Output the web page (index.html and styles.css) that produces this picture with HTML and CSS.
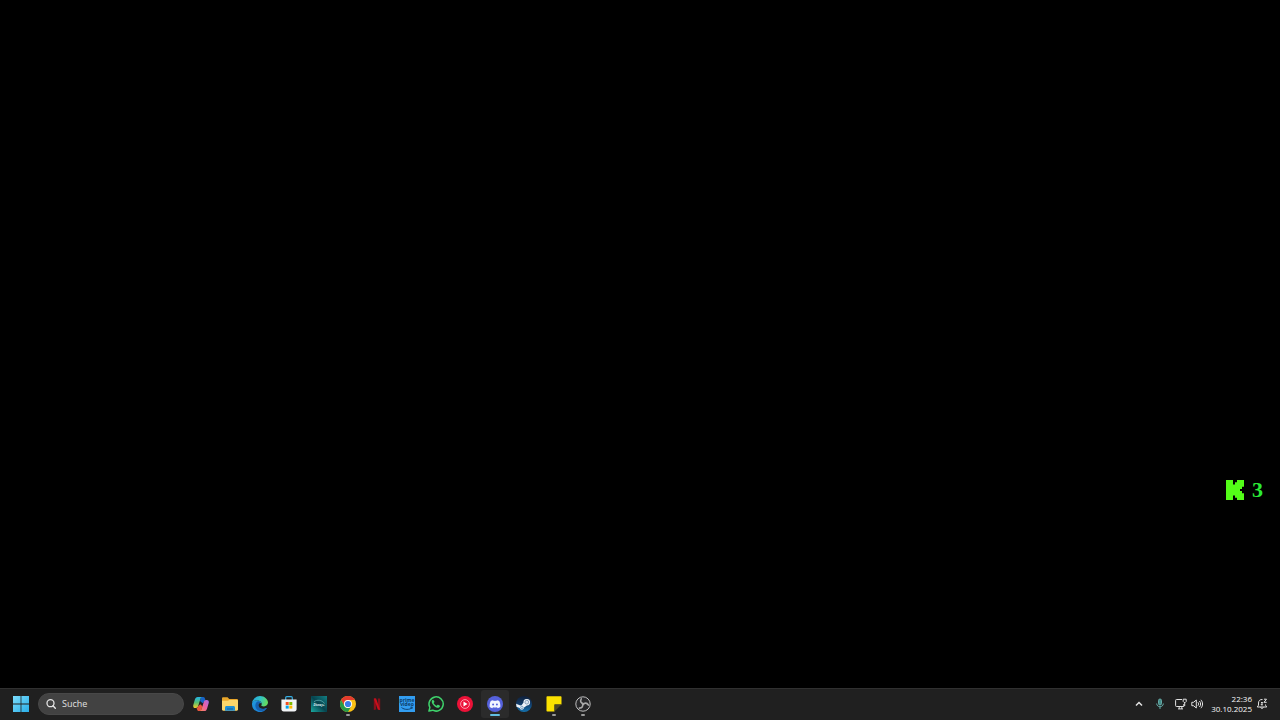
FILE: index.html
```html
<!DOCTYPE html>
<html lang="de">
<head>
  <meta charset="UTF-8" />
  <meta name="viewport" content="width=device-width, initial-scale=1.0"/>
  <title>Desktop</title>
  <link rel="stylesheet" href="styles.css">
</head>

<body>
  <!-- Desktop -->
  <main class="desktop">
    <div class="kick-counter">
      <svg class="kick-logo" viewBox="0 0 9 10" preserveAspectRatio="none" aria-hidden="true">
        <path fill="#53fc18" d="M0 0h3.500v2.200h1V1.100h1V0H9v3.400H8v1.100H7v1h1v1.100h1V10H5.500V8.900h-1V7.800h-1V10H0z"/>
      </svg>
      <span class="kick-count">3</span>
    </div>
  </main>

  <!-- Taskbar -->
  <footer class="taskbar">
    <div class="taskbar-left">
      <button class="app" aria-label="Start">
        <svg class="icon" viewBox="0 0 16 16">
          <defs>
            <linearGradient id="win" x1="0" y1="0" x2="1" y2="1">
              <stop offset="0" stop-color="#7bdcfb"/><stop offset="1" stop-color="#29aee8"/>
            </linearGradient>
          </defs>
          <path fill="url(#win)" d="M0 0h7.600v7.600H0zM8.400 0H16v7.600H8.400zM0 8.400h7.600V16H0zM8.400 8.400H16V16H8.400z"/>
        </svg>
      </button>

      <label class="search">
        <svg class="search-icon" viewBox="0 0 10 10">
          <circle cx="4.500" cy="4.200" r="3.500" fill="none" stroke="#e4e4e4" stroke-width="1.300"/>
          <path d="M7 6.800l2.300 2.400" stroke="#e4e4e4" stroke-width="1.400" stroke-linecap="round"/>
        </svg>
        <input type="text" placeholder="Suche" aria-label="Suche">
      </label>

      <nav class="apps">
        <button class="app" aria-label="Copilot">
          <svg class="icon" viewBox="0 0 16 16">
            <defs>
              <linearGradient id="cpA" x1="0" y1="0" x2="0" y2="1">
                <stop offset="0" stop-color="#23b5e8"/><stop offset=".5" stop-color="#56bf74"/><stop offset="1" stop-color="#f4cb28"/>
              </linearGradient>
              <linearGradient id="cpB" x1="1" y1="0" x2="0" y2="1">
                <stop offset="0" stop-color="#a56be8"/><stop offset=".5" stop-color="#ec5fa5"/><stop offset="1" stop-color="#f78555"/>
              </linearGradient>
            </defs>
            <path fill="#1763c6" d="M8 1h2.300c1 0 1.400.7 1.700 1.800l.6 2-3 2.500L7 5z"/>
            <path fill="url(#cpA)" d="M4.800 1h4.100c-1 .4-1.300 1.200-1.600 2.200L5.200 10c-.4 1.300-1 2-2.300 2H2.200C.5 12-.1 10.700.3 9l1.600-5.400C2.400 1.900 3.200 1 4.800 1z"/>
            <path fill="#e9553d" d="M8 15H5.700c-1 0-1.400-.7-1.700-1.800l-.4-1.300c1-.2 1.300-.9 1.600-1.700l2-2 2.300 2-.8 2.600C8.400 14 8.600 14.600 8 15z"/>
            <path fill="url(#cpB)" d="M11.200 15H7.100c1-.4 1.300-1.200 1.600-2.200L10.800 6c.4-1.300 1-2 2.300-2h.7c1.700 0 2.300 1.300 1.900 3l-1.600 5.400c-.5 1.700-1.300 2.600-2.900 2.600z"/>
          </svg>
        </button>
        <button class="app" aria-label="Explorer">
          <svg class="icon" viewBox="0 0 16 16">
            <path fill="#e8a62b" d="M0 2.500C0 1.700.5 1.200 1.300 1.200h4.300L7.200 3h7.500c.8 0 1.300.5 1.300 1.200V7H0z"/>
            <path fill="#fbd66a" d="M0 4.800h5.800L7.400 4h7.500c.7 0 1.100.4 1.100 1.100v8.400c0 .7-.5 1.200-1.200 1.200H1.200C.5 14.700 0 14.200 0 13.500z"/>
            <path fill="#1f8fd3" d="M3 14.700v-3.200c0-.9.600-1.500 1.500-1.500h7c.9 0 1.500.6 1.500 1.500v3.200z"/>
            <path fill="#145f9f" d="M5 12.500h6v1H5z"/>
          </svg>
        </button>
        <button class="app" aria-label="Edge">
          <svg class="icon" viewBox="0 0 16 16">
            <defs>
              <linearGradient id="edA" x1="0" y1="0" x2="1" y2=".3">
                <stop offset="0" stop-color="#249fe0"/><stop offset=".55" stop-color="#32c3c7"/><stop offset="1" stop-color="#62db62"/>
              </linearGradient>
              <linearGradient id="edB" x1="0" y1="0" x2="1" y2="1">
                <stop offset="0" stop-color="#219ce0"/><stop offset="1" stop-color="#1976cc"/>
              </linearGradient>
            </defs>
            <path fill="url(#edB)" d="M.1 7C.8 4.800 3 4 5.100 4.200 8 4.500 9.500 6 9.500 7.600 8 6.200 6.300 7.500 6.300 9.300c0 2.700 3 4.400 5.700 3.600.8-.2 1.500-.5 2.200-.9.4-.2.600.1.400.5A8 8 0 0 1 0 8.500z"/>
            <path fill="#155fae" d="M6 5.200c-3.300 1.400-3.500 6.300-.4 8.800 2.500 2 6.300 1.200 8.700-1.500.4-.5.100-.8-.4-.5-3.700 2-7.600.1-7.600-2.700 0-1.500 1-2.500 2.200-2.500C8.300 6 7.400 5.300 6 5.200z"/>
            <path fill="url(#edA)" d="M0 7.600A8 8 0 0 1 8 0c4.800 0 8 3.500 8 6.600 0 2.300-1.900 3.900-4.100 3.900-2 0-3-.8-2.500-1.500.5-.7.500-1.300.2-2C8.900 5.200 7.100 4.200 5 4.200 2.200 4.200.2 5.800 0 7.600z"/>
          </svg>
        </button>
        <button class="app" aria-label="Microsoft Store">
          <svg class="icon" viewBox="0 0 16 16">
            <path fill="none" stroke="#36aee3" stroke-width="1.200" d="M4.700 4V1.800c0-.7.400-1.100 1.100-1.100h4.400c.7 0 1.100.4 1.100 1.100V4"/>
            <path fill="#f1f3f5" d="M.4 3.500h15.200v9.600c0 1.500-.8 2.400-2.300 2.400H2.700C1.200 15.500.4 14.600.4 13.100z"/>
            <path fill="#f25022" d="M4.700 6h3v3h-3z"/>
            <path fill="#7fba00" d="M8.300 6h3v3h-3z"/>
            <path fill="#00a4ef" d="M4.700 9.600h3v3h-3z"/>
            <path fill="#ffb900" d="M8.300 9.600h3v3h-3z"/>
          </svg>
        </button>
        <button class="app" aria-label="Disney+">
          <svg class="icon" viewBox="0 0 16 16">
            <defs>
              <linearGradient id="dis" x1="1" y1="0" x2="0" y2="1">
                <stop offset="0" stop-color="#127f83"/><stop offset=".5" stop-color="#07434e"/><stop offset="1" stop-color="#1aa9a0"/>
              </linearGradient>
            </defs>
            <path fill="url(#dis)" d="M0 0h16v16H0z"/>
            <path fill="none" stroke="#69b9bb" stroke-width=".7" d="M3 5.700c3-2.400 8.300-1.800 10.500 1.800"/>
            <text class="disney-text" x="8" y="10">Disney+</text>
          </svg>
        </button>
        <button class="app running" aria-label="Chrome">
          <svg class="icon" viewBox="0 0 16 16">
            <circle cx="8" cy="8" r="8" fill="#fbc116"/>
            <path fill="#e33b2e" d="M1.070 4A8 8 0 0 1 14.930 4H8a4 4 0 0 0-3.460 6z"/>
            <path fill="#269b48" d="M1.070 4A8 8 0 0 0 8 16l3.460-6a4 4 0 0 1-6.920 0z"/>
            <circle cx="8" cy="8" r="4" fill="#fff"/>
            <circle cx="8" cy="8" r="3.100" fill="#3b7de8"/>
          </svg>
        </button>
        <button class="app" aria-label="Netflix">
          <svg class="icon" viewBox="0 0 16 16">
            <path fill="#86101a" d="M4.800 2.500h2.300v11l-2.300.4zM8.900 2.500h2.300v11.400l-2.300-.4z"/>
            <path fill="#c90f1c" d="M4.800 2.500h2.300l4.100 11.400-2.400-.4z"/>
          </svg>
        </button>
        <button class="app" aria-label="Prime Video">
          <svg class="icon" viewBox="0 0 16 16">
            <path fill="#329df0" d="M0 0h16v16H0z"/>
            <text class="prime-text" x="8" y="5.500">prime</text>
            <text class="prime-text" x="8" y="10">video</text>
            <path fill="none" stroke="#0b3b68" stroke-width=".9" d="M2.500 11.500c3 2.500 8 2.500 10.500.2M11.300 11.200l2-.1-.5 1.900"/>
          </svg>
        </button>
        <button class="app" aria-label="WhatsApp">
          <svg class="icon" viewBox="0 0 16 16">
            <path fill="none" stroke="#3fd36c" stroke-width="1.500" stroke-linejoin="round" d="M.9 15.100l1-3.700A7.100 7.100 0 1 1 4.700 14.200z"/>
            <path fill="#3fd36c" d="M5.500 4.200c-.3-.5-.9-.4-1.300.1-1.700 2.300 1.700 6 4.300 7.200 1.600.7 3.400.1 3.500-1.500 0-.3-.1-.5-.4-.6l-1.500-.7c-.3-.1-.5 0-.7.2l-.6.700c-.2.2-.4.2-.6.100C7 9.100 6.200 8.200 5.700 7.300c-.1-.2 0-.4.100-.5l.5-.6c.1-.2.200-.4.100-.6z"/>
          </svg>
        </button>
        <button class="app" aria-label="YouTube Music">
          <svg class="icon" viewBox="0 0 16 16">
            <circle cx="8" cy="8" r="8" fill="#ec1238"/>
            <circle cx="8" cy="8" r="4.400" fill="none" stroke="#ffb5c2" stroke-width=".8"/>
            <path fill="#fff" d="M6.500 5.500l4 2.500-4 2.500z"/>
          </svg>
        </button>
        <button class="app active" aria-label="Discord">
          <svg class="icon" viewBox="0 0 16 16">
            <circle cx="8" cy="8" r="8" fill="#5561dc"/>
            <path fill="#f3f4ff" fill-rule="evenodd" d="M6.300 4.200c-1 .1-1.800.4-2.500.8C2.900 6.700 2.500 8.700 2.700 11c.9.600 1.800 1 2.700 1.200l.6-1c1.300.3 2.700.3 4 0l.6 1c.9-.2 1.800-.6 2.700-1.200.2-2.300-.2-4.300-1.100-6-.7-.4-1.500-.7-2.500-.8l-.3.700a9 9 0 0 0-2.800 0zM6.100 7.400a1 1.100 0 1 1 0 2.200 1 1.100 0 0 1 0-2.200zM9.900 7.400a1 1.100 0 1 1 0 2.200 1 1.100 0 0 1 0-2.200z"/>
          </svg>
        </button>
        <button class="app" aria-label="Steam">
          <svg class="icon" viewBox="0 0 16 16">
            <defs>
              <linearGradient id="stm" x1="0" y1="0" x2="0" y2="1">
                <stop offset="0" stop-color="#101f38"/><stop offset=".5" stop-color="#123c69"/><stop offset="1" stop-color="#1473b0"/>
              </linearGradient>
            </defs>
            <circle cx="8" cy="8" r="8" fill="url(#stm)"/>
            <path fill="#eef3f8" d="M.1 7.800l4.300 1.800c.4-.2.800-.3 1.200-.3L7.500 6.500a3.300 3.300 0 1 1 3.400 3L8.100 11.600a2.300 2.300 0 0 1-4.500.5L.5 10.800z"/>
            <circle cx="10.800" cy="6.200" r="1.900" fill="#dbe6f0" stroke="#3a5f85" stroke-width=".5"/>
            <circle cx="5.900" cy="11.500" r="1.300" fill="#d4e3ef" stroke="#3a6f9c" stroke-width=".5"/>
          </svg>
        </button>
        <button class="app running" aria-label="Kurznotizen">
          <svg class="icon" viewBox="0 0 16 16">
            <path fill="#fce100" d="M1.200.3h13.600c.4 0 .7.3.7.7v7.500h-7v7H1.200c-.4 0-.7-.3-.7-.7V1c0-.4.3-.7.700-.7z"/>
            <path fill="#4d4626" d="M8.500 8.500h7l-7 7z"/>
          </svg>
        </button>
        <button class="app running" aria-label="OBS Studio">
          <svg class="icon" viewBox="0 0 16 16">
            <circle cx="8" cy="8" r="7.200" fill="#272729" stroke="#bdbdbd" stroke-width="1"/>
            <g fill="none" stroke="#a8a8a8" stroke-width="1.600" stroke-linecap="round">
              <path d="M6.200 2.800c-1.300 2.600-.2 4.600 2.500 4.900"/>
              <path d="M6.200 2.800c-1.300 2.600-.2 4.600 2.500 4.900" transform="rotate(120 8 8)"/>
              <path d="M6.200 2.800c-1.300 2.600-.2 4.600 2.500 4.900" transform="rotate(240 8 8)"/>
            </g>
          </svg>
        </button>
      </nav>
    </div>

    <!-- Infobereich -->
    <div class="tray">
      <button class="tray-button" aria-label="Ausgeblendete Symbole">
        <svg class="tray-icon" viewBox="0 0 12 12"><path d="M3 7.500l3-3 3 3" stroke-width="1.500"/></svg>
      </button>
      <button class="tray-button mic" aria-label="Mikrofon">
        <svg class="tray-icon" viewBox="0 0 12 12">
          <rect x="4.500" y="1" width="3" height="6" rx="1.500" fill="#478d8a"/>
          <path d="M2.700 5.500c0 4.300 6.600 4.300 6.600 0M6 8.800V11"/>
        </svg>
      </button>
      <button class="tray-button system" aria-label="Netzwerk und Lautstärke">
        <svg class="tray-icon" viewBox="0 0 12 12">
          <path d="M7 1.500H1.500c-.6 0-.9.300-.9.900v5.200c0 .6.300.9.900.9h7.300V6M3 10.900h5M4.200 8.500v2.400M6.800 8.500v2.400"/>
          <path d="M8.200 1.200h3v2.300l-1 1h-1l-1-1zM9.700 4.500V8"/>
        </svg>
        <svg class="tray-icon" viewBox="0 0 12 12">
          <path d="M.8 4.300h1.700L5.300 2v8L2.500 7.700H.8zM6.900 4.300c.9 1 .9 2.400 0 3.400M8.400 3c1.600 1.700 1.600 4.300 0 6M9.900 1.800c2.200 2.500 2.200 5.900 0 8.400"/>
        </svg>
      </button>
      <button class="clock">
        <time datetime="22:36">22:36</time>
        <time datetime="2025-10-30">30.10.2025</time>
      </button>
      <button class="tray-button bell" aria-label="Benachrichtigungen">
        <svg class="tray-icon" viewBox="0 0 12 12">
          <path d="M6.500 1.500C4 1.200 2.500 2.800 2.500 5v2.200L1.300 9h9.400L9.500 7.200V6.500M4.700 9.300c.3 1.500 2.300 1.500 2.600 0M8 1.200h2.500L8 4.300h2.700M5 4.500h1.800L5 6.800h2"/>
        </svg>
      </button>
    </div>
  </footer>
</body>
</html>
```
FILE: styles.css
```css
/* ===== Reset & Font ===== */
* {
  margin: 0;
  padding: 0;
  box-sizing: border-box;
}
body {
  min-height: 100vh;
  display: flex;
  flex-direction: column;
  background: #000;
  font-family: "Open Sans", "Noto Sans", sans-serif;
  overflow: hidden;
}
button {
  background: none;
  border: none;
  font-family: inherit;
  color: inherit;
}
svg {
  display: block;
}

/* ===== Desktop ===== */
.desktop {
  flex: 1;
  position: relative;
}
.kick-counter {
  position: absolute;
  right: 17px;
  bottom: 186px;
  display: flex;
  align-items: center;
  gap: 8px;
}
.kick-logo {
  width: 18px;
  height: 20px;
}
.kick-count {
  font: bold 22px/24px "Liberation Serif", serif;
  color: #2bea35;
}

/* ===== Taskbar ===== */
.taskbar {
  height: 32px;
  padding: 0 12px 0 7px;
  display: flex;
  align-items: center;
  justify-content: space-between;
  background: #202020;
  box-shadow: inset 0 1px #303030;
  color: #f8f8f8;
}
.taskbar-left {
  display: flex;
  align-items: center;
  gap: 3px;
}
.search {
  width: 146px;
  height: 22px;
  padding: 0 7px;
  display: flex;
  align-items: center;
  gap: 6px;
  background: #424242;
  border: 1px solid #484848;
  border-radius: 11px;
}
.search-icon {
  width: 10px;
  height: 10px;
  flex: none;
}
.search input {
  flex: 1;
  min-width: 0;
  background: none;
  border: none;
  outline: none;
  font: 9px/12px "Open Sans", "Noto Sans", sans-serif;
  color: #fff;
}
.search input::placeholder {
  color: #e0e0e0;
}

/* ===== Apps ===== */
.apps {
  width: 410px;
  display: flex;
  justify-content: space-between;
}
.app {
  position: relative;
  width: 28px;
  height: 28px;
  display: flex;
  align-items: center;
  justify-content: center;
  border-radius: 3px;
}
.icon {
  width: 16px;
  height: 16px;
}
.app.active {
  background: #2b2b2b;
}
.app.running::after,
.app.active::after {
  content: "";
  position: absolute;
  bottom: 2px;
  width: 4px;
  height: 2px;
  border-radius: 1px;
  background: #9a9a9a;
}
.app.active::after {
  width: 10px;
  background: #62bfe3;
}
.disney-text {
  font: italic bold 3px "Open Sans", sans-serif;
  fill: #d9eeee;
  text-anchor: middle;
}
.prime-text {
  font: bold 5px "Open Sans", sans-serif;
  fill: #0b3b68;
  text-anchor: middle;
}

/* ===== Tray ===== */
.tray {
  display: flex;
  align-items: center;
  gap: 4px;
}
.tray-button {
  display: flex;
  align-items: center;
}
.tray-icon {
  width: 12px;
  height: 12px;
  fill: none;
  stroke: #e2e2e2;
  stroke-width: 1;
}
.mic {
  padding: 0 5px;
}
.mic .tray-icon {
  stroke: #65aaa6;
}
.system {
  gap: 4px;
}
.clock {
  display: flex;
  flex-direction: column;
  align-items: flex-end;
  padding-left: 4px;
  font-size: 8px;
  line-height: 10px;
}
```
